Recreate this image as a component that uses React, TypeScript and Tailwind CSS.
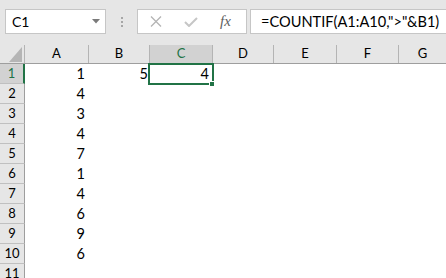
import React from "react";

const font = { fontFamily: "Lato, 'Liberation Sans', sans-serif" };

const cols = [
  { key: "A", w: "w-[64px]" },
  { key: "B", w: "w-[61px]" },
  { key: "C", w: "w-[63px]" },
  { key: "D", w: "w-[61px]" },
  { key: "E", w: "w-[63px]" },
  { key: "F", w: "w-[62px]" },
  { key: "G", w: "flex-1" },
];

const aVals = ["1", "4", "3", "4", "7", "1", "4", "6", "9", "6", ""];

export default function App() {
  return (
    <div
      className="relative w-[446px] h-[278px] overflow-hidden bg-white text-black"
      style={font}
    >
      {/* Toolbar */}
      <div className="flex h-[45px] items-start bg-[#e6e6e6] pt-[9px] pl-[5px]">
        <div className="flex h-[25px] w-[101px] items-center justify-between border border-[#c6c6c6] bg-white pl-[6px] pr-[5px] text-[14px]">
          <span>C1</span>
          <svg width="8" height="5" viewBox="0 0 8 5">
            <path d="M0 0 L8 0 L4 4.5 Z" fill="#7a7a7a" />
          </svg>
        </div>
        <div className="flex h-[25px] w-[31px] flex-col items-center justify-center gap-[2px]">
          <div className="h-[2px] w-[2px] bg-[#a6a6a6]" />
          <div className="h-[2px] w-[2px] bg-[#a6a6a6]" />
          <div className="h-[2px] w-[2px] bg-[#a6a6a6]" />
        </div>
        <div className="flex h-[25px] w-[110px] items-center border border-[#c6c6c6] bg-white">
          <svg className="ml-[12px]" width="12" height="11" viewBox="0 0 12 11">
            <path d="M1 0.5 L11 10.5 M11 0.5 L1 10.5" stroke="#b4b4b4" strokeWidth="1.3" />
          </svg>
          <svg className="ml-[22px]" width="14" height="10" viewBox="0 0 14 10">
            <path d="M1 5 L5 9 L13 1" stroke="#c6c6c6" strokeWidth="2" fill="none" />
          </svg>
          <span
            className="ml-[22px] text-[15px] italic text-[#606060]"
            style={{ fontFamily: "'Liberation Serif', serif" }}
          >
            fx
          </span>
        </div>
        <div className="ml-[3px] flex h-[25px] flex-1 items-center border border-r-0 border-[#c6c6c6] bg-white pl-[10px] text-[14.6px]">
          =COUNTIF(A1:A10,"&gt;"&amp;B1)
        </div>
      </div>

      {/* Column headers */}
      <div className="flex h-[19px] bg-[#e6e6e6] border-b border-[#9e9e9e] text-[13px]">
        <div className="relative w-[25px] border-r border-[#b4b4b4]">
          <svg className="absolute left-[9px] top-[2px]" width="13" height="15" viewBox="0 0 13 15">
            <path d="M13 0 L13 15 L0 15 Z" fill="#b5b5b5" />
          </svg>
        </div>
        {cols.map((c) => (
          <div
            key={c.key}
            className={`${c.w} flex items-center justify-center ${
              c.key === "C" ? "bg-[#d2d2d2] text-[#217346]" : ""
            } ${c.key === "G" ? "" : "border-r border-[#b4b4b4]"}`}
          >
            {c.key}
          </div>
        ))}
      </div>

      {/* Rows */}
      {aVals.map((v, i) => (
        <div key={i} className="flex h-[20px]">
          <div
            className={`flex w-[25px] items-center justify-center border-b border-[#c0c0c0] text-[13px] ${
              i === 0
                ? "bg-[#d2d2d2] text-[#217346] border-r-2 border-r-[#217346]"
                : "bg-[#e6e6e6] border-r border-r-[#9e9e9e]"
            }`}
          >
            {i + 1}
          </div>
          <div className="flex w-[64px] items-center justify-end pr-[4px] text-[14.5px]">{v}</div>
          <div className="flex w-[61px] items-center justify-end pr-[2px] text-[14.5px]">
            {i === 0 ? "5" : ""}
          </div>
          <div className="flex w-[63px] items-center justify-end pr-[4px] text-[14.5px]">
            {i === 0 ? "4" : ""}
          </div>
          <div className="flex-1" />
        </div>
      ))}

      {/* Selection */}
      <div className="pointer-events-none absolute left-[148px] top-[63px] h-[22px] w-[66px] border-2 border-[#217346]" />
      <div className="pointer-events-none absolute left-[209px] top-[81px] h-[6px] w-[6px] border border-white bg-[#217346]" />
    </div>
  );
}
